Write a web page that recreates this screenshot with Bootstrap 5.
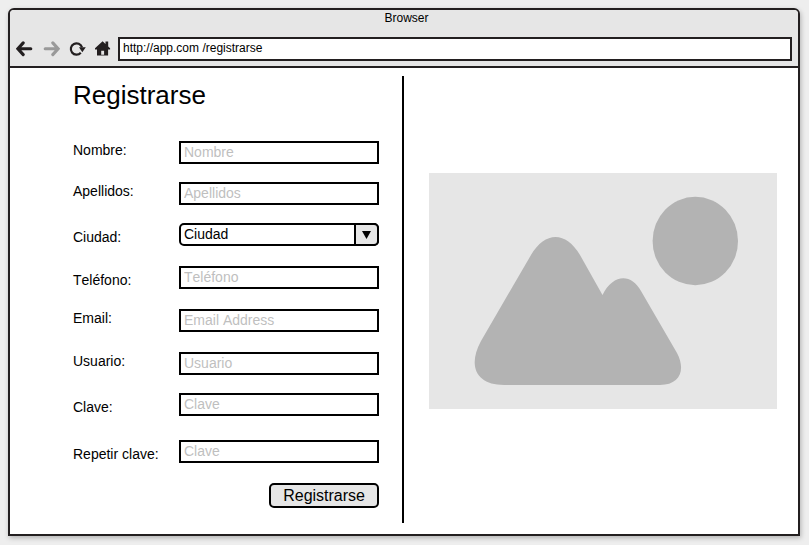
<!DOCTYPE html>
<html lang="es">
<head>
<meta charset="utf-8">
<meta name="viewport" content="width=device-width, initial-scale=1">
<title>Registrarse</title>
<link href="https://cdn.jsdelivr.net/npm/bootstrap@5.3.0/dist/css/bootstrap.min.css" rel="stylesheet">
<style>
  body { background: #eee; color: #000; font-family: "Liberation Sans", Arial, sans-serif; font-size: 14px; font-kerning: none; padding: 8px 9px 9px 8px; }
  input, select, button { font-kerning: none; }
  .browser { border: 2px solid #231f20; border-radius: 6px 6px 0 0; box-shadow: 1px 2px 5px rgba(0, 0, 0, .25); }
  .browser-head { background: #e6e6e6; border-bottom: 2px solid #231f20; border-radius: 4px 4px 0 0; padding: 0 6px 5px; font-size: 12px; }
  .browser-title { line-height: 16px; margin-bottom: 11px; padding-left: 5px; }
  .tool { width: 18px; height: 18px; color: #231f20; }
  .tool:disabled { color: #999; }
  .address { border: 2px solid #231f20; height: 24px; margin-left: 6px; padding: 0 3px 2px; color: #000; }
  .page-body { padding: 8px 0 11px; }
  .form-side { border-right: 2px solid #000; padding: 0 23px 0 63px; }
  .page-title { font-size: 26px; line-height: 30px; margin: 4px 0 31px; font-weight: 400; }
  .field { margin-bottom: 20px; }
  .field-near { margin-bottom: 18px; }
  .field-far { margin-bottom: 24px; }
  .field label { width: 106px; line-height: 18px; }
  .box { height: 23px; border: 2px solid #000; padding: 0 3px 2px; color: #000; background: #fff; font-size: 14px; line-height: 17px; }
  .box::placeholder { color: #bfbfbf; opacity: 1; }
  select.box { appearance: none; border-radius: 5px; padding: 0 26px 0 3px; line-height: 19px; }
  .drop { width: 25px; background: #e6e6e6; border: 2px solid #000; border-radius: 0 5px 5px 0; }
  .send { height: 25px; border: 2px solid #000; border-radius: 5px; background: #e6e6e6; color: #000; font-size: 16px; line-height: 19px; padding: 0 12px; }
  .picture-side { padding: 0 21px 17px 25px; }
</style>
<script src="https://cdn.jsdelivr.net/npm/bootstrap@5.3.0/dist/js/bootstrap.bundle.min.js" defer></script>
</head>
<body class="min-vh-100 d-flex flex-column">
<div class="browser bg-white flex-grow-1 d-flex flex-column">
  <header class="browser-head">
    <div class="browser-title text-center">Browser</div>
    <div class="d-flex align-items-center">
      <nav class="d-flex gap-2" aria-label="Navegación">
        <button type="button" class="tool btn p-0 border-0 d-flex" aria-label="Atrás">
          <svg width="18" height="18" fill="none" stroke="currentColor" stroke-width="3.1" stroke-linecap="round"><path d="M14.800 8.800H3M7.200 2.900 1.900 8.800l5.300 5.800"/></svg>
        </button>
        <button type="button" class="tool btn p-0 border-0 d-flex opacity-100" aria-label="Adelante" disabled>
          <svg width="18" height="18" fill="none" stroke="currentColor" stroke-width="3.1" stroke-linecap="round"><path d="M3.200 8.800H15M10.800 2.900l5.300 5.900-5.300 5.800"/></svg>
        </button>
        <button type="button" class="tool btn p-0 border-0 d-flex" aria-label="Recargar">
          <svg width="18" height="18"><path d="M12.800 12.800A5.700 5.700 0 1 1 14 7.400" fill="none" stroke="currentColor" stroke-width="2.200"/><path d="M11 7.200h6.800L14.300 12.200z" fill="currentColor"/></svg>
        </button>
        <button type="button" class="tool btn p-0 border-0 d-flex" aria-label="Inicio">
          <svg width="18" height="18" fill="currentColor" fill-rule="evenodd"><path d="M1 9.300V8.200L8.600 1.200l2.900 2.800V1.600h2.700v5l1.900 1.700v1.200H14.100v5.900H3V9.500H1zM7.200 10.800v4h2.900v-4z"/></svg>
        </button>
      </nav>
      <input class="address flex-grow-1 rounded-0 bg-white" type="text" aria-label="Dirección" value="http://app.com /registrarse">
    </div>
  </header>
  <main class="page-body flex-grow-1 d-flex">
    <div class="row g-0 w-100">
      <section class="col-6 form-side">
        <h1 class="page-title">Registrarse</h1>
        <form>
          <div class="field field-near d-flex align-items-start">
            <label for="nombre">Nombre:</label>
            <input id="nombre" type="text" class="box flex-fill w-50" placeholder="Nombre">
          </div>
          <div class="field field-near d-flex align-items-start">
            <label for="apellidos">Apellidos:</label>
            <input id="apellidos" type="text" class="box flex-fill w-50" placeholder="Apellidos">
          </div>
          <div class="field d-flex align-items-end">
            <label for="ciudad">Ciudad:</label>
            <div class="position-relative flex-fill d-flex">
              <select id="ciudad" class="box w-100"><option>Ciudad</option></select>
              <span class="drop position-absolute top-0 end-0 h-100 pe-none d-flex align-items-center justify-content-center">
                <svg width="9" height="8"><path d="M0 0h9L4.500 8z"/></svg>
              </span>
            </div>
          </div>
          <div class="field d-flex align-items-end">
            <label for="telefono">Teléfono:</label>
            <input id="telefono" type="tel" class="box flex-fill w-50" placeholder="Teléfono">
          </div>
          <div class="field d-flex align-items-start">
            <label for="email">Email:</label>
            <input id="email" type="email" class="box flex-fill w-50" placeholder="Email Address">
          </div>
          <div class="field field-near d-flex align-items-start">
            <label for="usuario">Usuario:</label>
            <input id="usuario" type="text" class="box flex-fill w-50" placeholder="Usuario">
          </div>
          <div class="field field-far d-flex align-items-end">
            <label for="clave">Clave:</label>
            <input id="clave" type="password" class="box flex-fill w-50" placeholder="Clave">
          </div>
          <div class="field d-flex align-items-end">
            <label for="repetir">Repetir clave:</label>
            <input id="repetir" type="password" class="box flex-fill w-50" placeholder="Clave">
          </div>
          <div class="d-flex justify-content-end">
            <button type="submit" class="send">Registrarse</button>
          </div>
        </form>
      </section>
      <section class="col-6 picture-side d-flex align-items-center">
        <svg class="w-100 h-auto" viewBox="0 0 348 236" role="img" aria-label="Imagen">
          <path fill="#e6e6e6" d="M0 0h348v236H0z"/>
          <g fill="#b3b3b3">
            <ellipse cx="266.300" cy="68" rx="42.700" ry="44.200"/>
            <path d="M102 82C116 58 137 58 151 82L173.500 122C184 101 202 100 212 118L248 180C257 197 251 212 231 212H75C48 212 38 194 52 168Z"/>
          </g>
        </svg>
      </section>
    </div>
  </main>
</div>
</body>
</html>
